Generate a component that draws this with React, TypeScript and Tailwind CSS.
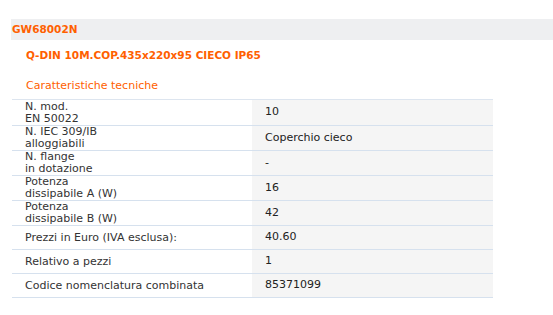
import React from 'react';

const rows: { label: string[]; value: string }[] = [
    { label: ['N. mod.', 'EN 50022'], value: '10' },
    { label: ['N. IEC 309/IB', 'alloggiabili'], value: 'Coperchio cieco' },
    { label: ['N. flange', 'in dotazione'], value: '-' },
    { label: ['Potenza', 'dissipabile A (W)'], value: '16' },
    { label: ['Potenza', 'dissipabile B (W)'], value: '42' },
    { label: ['Prezzi in Euro (IVA esclusa):'], value: '40.60' },
    { label: ['Relativo a pezzi'], value: '1' },
    { label: ['Codice nomenclatura combinata'], value: '85371099' },
];

export default function App() {
    return (
        <div className="w-[553px] h-[315px] bg-white pt-[19px] pl-[11px] text-[11px] text-[#333] [font-family:'DejaVu_Sans',Verdana,sans-serif]">
            <div className="h-[21px] bg-[#eeeff1] flex items-center pl-px font-bold text-[10.5px] text-[#ff6000]">GW68002N</div>

            <div className="pl-[15px] pt-[8px] leading-[14px] font-bold text-[10.5px] text-[#ff6000]">Q-DIN 10M.COP.435x220x95 CIECO IP65</div>

            <div className="pl-[15px] pt-[17px] leading-[14px] text-[#ff6000]">Caratteristiche tecniche</div>

            <table className="mt-[6px] ml-px w-[481px] border-collapse border-t border-[#dde5ef]">
                <tbody>
                    {rows.map((row, i) => (
                        <tr
                            key={i}
                            className={`border-b border-[#d6e1ee] ${i === 0 ? 'h-[26px]' : row.label.length > 1 ? 'h-[25px]' : 'h-[24px]'}`}
                        >
                            <td className="w-[240px] pl-[13px] leading-[12px] align-middle">
                                {row.label.map((l, j) => (
                                    <div key={j}>{l}</div>
                                ))}
                            </td>
                            <td className="bg-[#f5f5f5] pl-[13px] align-middle text-[#222]">{row.value}</td>
                        </tr>
                    ))}
                </tbody>
            </table>
        </div>
    );
}
